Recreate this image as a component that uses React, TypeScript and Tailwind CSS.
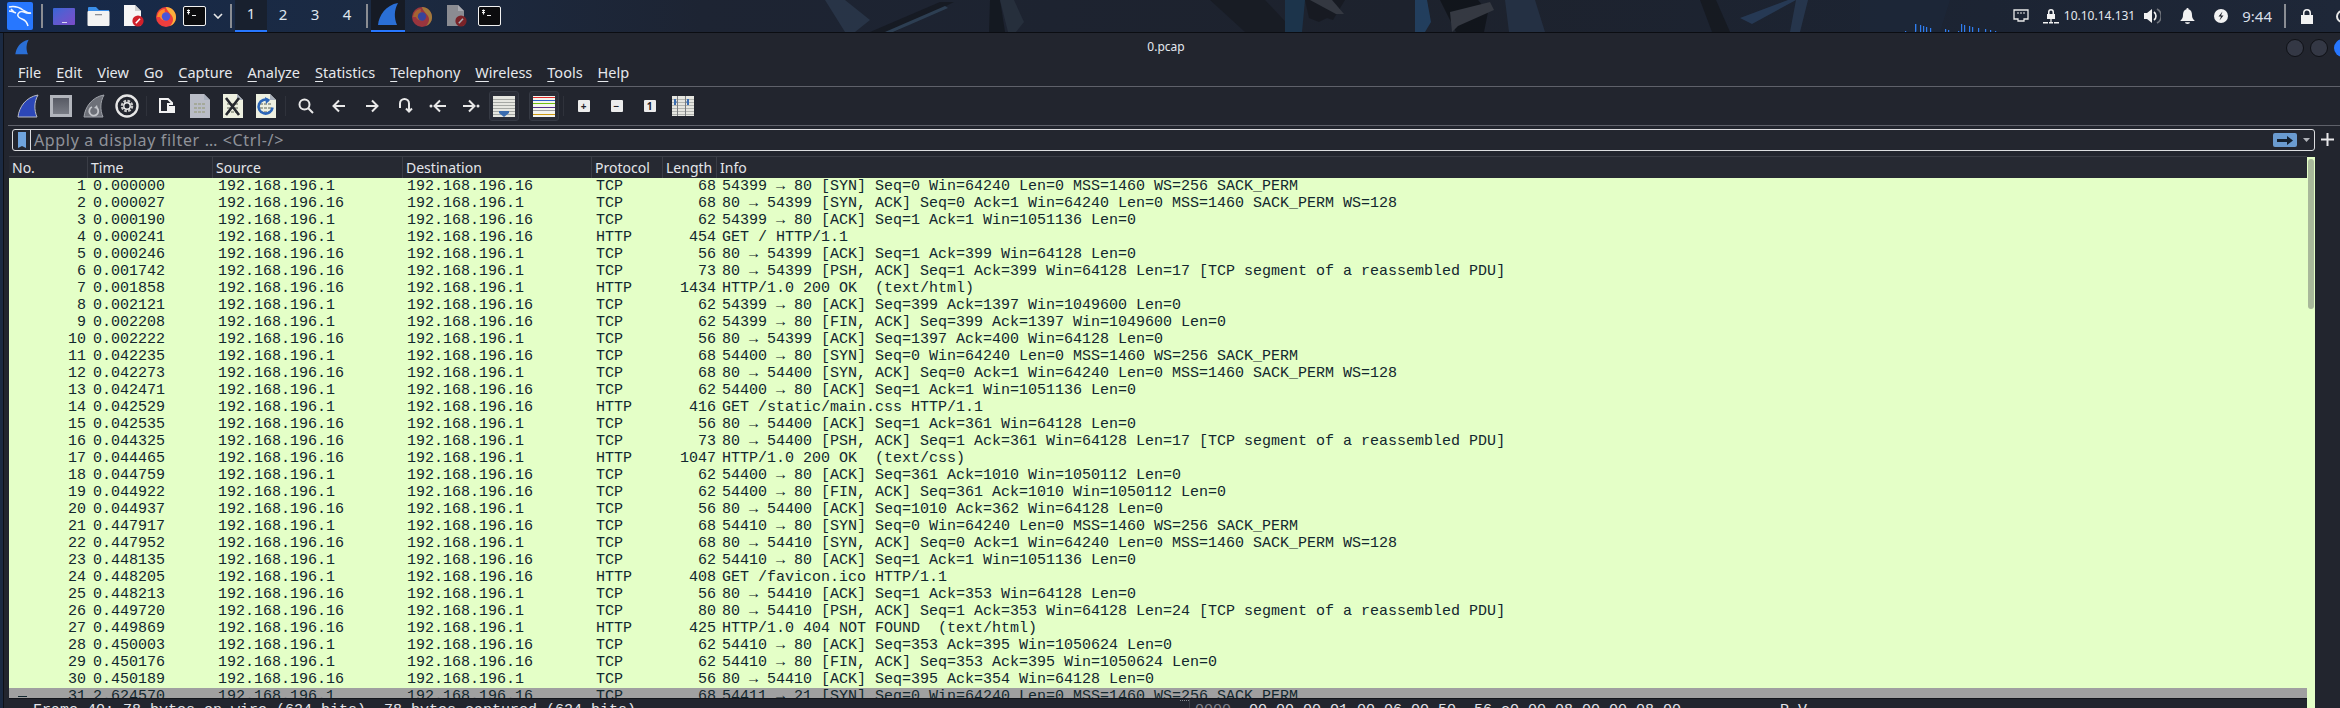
import React from "react";

const A = "192.168.196.1";
const B = "192.168.196.16";
type R = [number, string, boolean, string, number, string];
const syn = (p: number) => `${p} → 80 [SYN] Seq=0 Win=64240 Len=0 MSS=1460 WS=256 SACK_PERM`;
const synack = (p: number) => `80 → ${p} [SYN, ACK] Seq=0 Ack=1 Win=64240 Len=0 MSS=1460 SACK_PERM WS=128`;
const rows: R[] = [
  [1, "0.000000", true, "TCP", 68, syn(54399)],
  [2, "0.000027", false, "TCP", 68, synack(54399)],
  [3, "0.000190", true, "TCP", 62, "54399 → 80 [ACK] Seq=1 Ack=1 Win=1051136 Len=0"],
  [4, "0.000241", true, "HTTP", 454, "GET / HTTP/1.1"],
  [5, "0.000246", false, "TCP", 56, "80 → 54399 [ACK] Seq=1 Ack=399 Win=64128 Len=0"],
  [6, "0.001742", false, "TCP", 73, "80 → 54399 [PSH, ACK] Seq=1 Ack=399 Win=64128 Len=17 [TCP segment of a reassembled PDU]"],
  [7, "0.001858", false, "HTTP", 1434, "HTTP/1.0 200 OK  (text/html)"],
  [8, "0.002121", true, "TCP", 62, "54399 → 80 [ACK] Seq=399 Ack=1397 Win=1049600 Len=0"],
  [9, "0.002208", true, "TCP", 62, "54399 → 80 [FIN, ACK] Seq=399 Ack=1397 Win=1049600 Len=0"],
  [10, "0.002222", false, "TCP", 56, "80 → 54399 [ACK] Seq=1397 Ack=400 Win=64128 Len=0"],
  [11, "0.042235", true, "TCP", 68, syn(54400)],
  [12, "0.042273", false, "TCP", 68, synack(54400)],
  [13, "0.042471", true, "TCP", 62, "54400 → 80 [ACK] Seq=1 Ack=1 Win=1051136 Len=0"],
  [14, "0.042529", true, "HTTP", 416, "GET /static/main.css HTTP/1.1"],
  [15, "0.042535", false, "TCP", 56, "80 → 54400 [ACK] Seq=1 Ack=361 Win=64128 Len=0"],
  [16, "0.044325", false, "TCP", 73, "80 → 54400 [PSH, ACK] Seq=1 Ack=361 Win=64128 Len=17 [TCP segment of a reassembled PDU]"],
  [17, "0.044465", false, "HTTP", 1047, "HTTP/1.0 200 OK  (text/css)"],
  [18, "0.044759", true, "TCP", 62, "54400 → 80 [ACK] Seq=361 Ack=1010 Win=1050112 Len=0"],
  [19, "0.044922", true, "TCP", 62, "54400 → 80 [FIN, ACK] Seq=361 Ack=1010 Win=1050112 Len=0"],
  [20, "0.044937", false, "TCP", 56, "80 → 54400 [ACK] Seq=1010 Ack=362 Win=64128 Len=0"],
  [21, "0.447917", true, "TCP", 68, syn(54410)],
  [22, "0.447952", false, "TCP", 68, synack(54410)],
  [23, "0.448135", true, "TCP", 62, "54410 → 80 [ACK] Seq=1 Ack=1 Win=1051136 Len=0"],
  [24, "0.448205", true, "HTTP", 408, "GET /favicon.ico HTTP/1.1"],
  [25, "0.448213", false, "TCP", 56, "80 → 54410 [ACK] Seq=1 Ack=353 Win=64128 Len=0"],
  [26, "0.449720", false, "TCP", 80, "80 → 54410 [PSH, ACK] Seq=1 Ack=353 Win=64128 Len=24 [TCP segment of a reassembled PDU]"],
  [27, "0.449869", false, "HTTP", 425, "HTTP/1.0 404 NOT FOUND  (text/html)"],
  [28, "0.450003", true, "TCP", 62, "54410 → 80 [ACK] Seq=353 Ack=395 Win=1050624 Len=0"],
  [29, "0.450176", true, "TCP", 62, "54410 → 80 [FIN, ACK] Seq=353 Ack=395 Win=1050624 Len=0"],
  [30, "0.450189", false, "TCP", 56, "80 → 54410 [ACK] Seq=395 Ack=354 Win=64128 Len=0"],
  [31, "2.624570", true, "TCP", 68, "54411 → 21 [SYN] Seq=0 Win=64240 Len=0 MSS=1460 WS=256 SACK_PERM"],
];

const cols = "grid grid-cols-[79px_125px_190px_189px_71px_54px_1fr]";

const Fin = ({ fill = "#2b63c8", w = 22, h = 24 }: { fill?: string; w?: number; h?: number }) => (
  <svg width={w} height={h} viewBox="0 0 22 24">
    <path d="M1 23C2 13 9 3 21 1C17 8 17 16 20 23Z" fill={fill} />
  </svg>
);

const Terminal = () => (
  <svg width="23" height="20" viewBox="0 0 23 20">
    <rect x="0.5" y="0.5" width="22" height="19" rx="1.5" fill="#0c0c0e" stroke="#f2f2f2" />
    <path d="M4 4.5h3M4 6.5h3M5.5 3.5v5M9 9.5h4" stroke="#f2f2f2" strokeWidth="1.2" fill="none" />
  </svg>
);

const Firefox = ({ dim = false }: { dim?: boolean }) => (
  <svg width="22" height="22" viewBox="0 0 22 22" opacity={dim ? 0.6 : 1}>
    <circle cx="11" cy="12" r="10" fill="#ee3d3d" />
    <path d="M11 2c5 0 10 4 10 10 0 5-3 8-6 9 3-3 4-7 2-10-1-2-3-3-4-5-1-1-2-3-2-4Z" fill="#fbb03b" />
    <path d="M2 12C3 6 7 4 10 4c-1 2 0 3 2 4 3 1 3 5 0 7-3 1-6 0-7-3Z" fill="#ff8a2a" />
    <circle cx="11" cy="11.5" r="4.2" fill="#4a55d8" />
  </svg>
);

const Doc = ({ dim = false }: { dim?: boolean }) => (
  <svg width="22" height="22" viewBox="0 0 22 22">
    <path d="M1 0h11l6 6v15H1Z" fill={dim ? "#8b8c92" : "#f6f6f6"} />
    <path d="M12 0l6 6h-6Z" fill={dim ? "#a9aab0" : "#cfcfcf"} />
    <circle cx="15" cy="16" r="5.6" fill={dim ? "#7a2328" : "#d0202a"} />
    <path d="M12.8 18.2l4.2-4.4" stroke={dim ? "#a9aab0" : "#fff"} strokeWidth="1.6" />
  </svg>
);

const Launcher = ({ children, className = "" }: { children: React.ReactNode; className?: string }) => (
  <div className={`flex items-center justify-center ${className}`}>{children}</div>
);

const Wallpaper = () => (
  <svg className="absolute inset-0" width="2340" height="32" viewBox="0 0 2340 32">
    <defs>
      <linearGradient id="wp" x1="0" x2="1" y1="0" y2="0">
        <stop offset="0" stopColor="#16294a" />
        <stop offset="0.16" stopColor="#1b2a42" />
        <stop offset="0.3" stopColor="#1d2433" />
        <stop offset="0.6" stopColor="#1d222d" />
        <stop offset="0.85" stopColor="#1c2433" />
        <stop offset="1" stopColor="#1e2738" />
      </linearGradient>
    </defs>
    <rect width="2340" height="32" fill="url(#wp)" />
    <g opacity="0.75">
      <path d="M825 0h20l25 20 -15 12h-10Z" fill="#2c3a4e" />
      <path d="M870 32l70-30h14l-60 30Z" fill="#14181f" />
      <path d="M885 32l60-26 3 2-55 24Z" fill="#33485e" />
      <path d="M990 0h10l5 32h-16Z" fill="#12161c" />
      <path d="M1000 0h14l10 22 -8 10h-8Z" fill="#2a3340" />
      <path d="M1210 0h55l30 32h-50Z" fill="#171a21" />
      <path d="M1285 0h20l-3 32h-17Z" fill="#1c3a55" />
      <path d="M1305 0h40l-12 20-6-2-8 4-10-4Z" fill="#15181f" />
      <path d="M1310 0h22l12 14h-8Z" fill="#3c4048" />
      <path d="M1415 0h12l4 22-6 10h-10Z" fill="#24486e" />
      <path d="M1440 0h38l10 12-4 20h-28Z" fill="#0e1116" />
      <path d="M1450 12l40-10 4 8-36 16-6 6Z" fill="#3d4149" />
      <path d="M1505 0h30l10 32h-36Z" fill="#27354a" />
      <path d="M1700 0h16l14 32h-18Z" fill="#14171d" />
      <path d="M1740 18l48-18h8l-44 24Z" fill="#2a4160" />
      <path d="M1790 32l6-32h12l-8 32Z" fill="#2a3c55" />
      <path d="M1860 0h90l-10 32h-80Z" fill="#1c2a3e" opacity="0.6" />
    </g>
    {[1905, 1915, 1920, 1923, 1926, 1930, 1945, 1948, 1958, 1961, 1964, 1969, 1972, 1978, 1985, 1990, 1995].map((x, i) => (
      <rect key={x} x={x} y={31 - (i * 7) % 8} width="1.2" height={(i * 7) % 8 + 1} fill="#2f7df0" />
    ))}
    <rect x="1915" y="24" width="1.2" height="7" fill="#2f7df0" />
  </svg>
);

const Taskbar = () => (
  <div className="relative flex h-[32px] shrink-0 items-center">
    <Wallpaper />
    <div className="relative flex h-full items-center pl-[7px]">
      <div className="flex h-[28px] w-[26px] items-center justify-center rounded-[2px] bg-[#2777ff]">
        <svg width="24" height="24" viewBox="0 0 24 24" fill="none" stroke="#f2f7ff" strokeWidth="1.5">
          <path d="M1 3c5-1 10 0 14 3 3 2 6 3 8 3-3 1-5 0-7-1-3-1-5 0-6 2-1 2 1 4 4 5 3 1 5 3 6 7" />
          <path d="M1 7c3 0 5 1 7 2M3 5l3 3" />
        </svg>
      </div>
      <div className="ml-[8px] h-[24px] w-[2px] bg-[#8a8d93]" />
      <Launcher className="ml-[9px] w-[24px]">
        <div className="flex h-[17px] w-[22px] items-end justify-center rounded-[1px] bg-gradient-to-br from-[#3566d6] to-[#7a4bc8]">
          <div className="mb-[2px] h-[1px] w-[5px] bg-[#d9d9f5]" />
        </div>
      </Launcher>
      <Launcher className="ml-[10px] w-[24px]">
        <svg width="23" height="20" viewBox="0 0 23 20">
          <path d="M1 4V2q0-1 1-1h7l3 3h10v3H1Z" fill="#3a8ee8" />
          <rect x="0.5" y="5" width="22" height="15" rx="1" fill="#f3f3f3" />
          <rect x="8" y="8" width="7" height="1.3" fill="#8d9097" />
        </svg>
      </Launcher>
      <Launcher className="ml-[12px] w-[24px]"><Doc /></Launcher>
      <Launcher className="ml-[9px] w-[22px]"><Firefox /></Launcher>
      <Launcher className="ml-[5px] w-[24px]"><Terminal /></Launcher>
      <Launcher className="ml-[6px] w-[12px]">
        <svg width="10" height="6" viewBox="0 0 10 6" fill="none" stroke="#e8e8e8" strokeWidth="1.6"><path d="M1 1l4 4 4-4" /></svg>
      </Launcher>
      <div className="ml-[6px] h-[24px] w-[2px] bg-[#8a8d93]" />
      <div className="ml-[3px] flex h-full font-['Noto_Sans',sans-serif] text-[15px] text-[#dfe6ee]">
        {[1, 2, 3, 4].map((n) => (
          <div key={n} className={`flex h-full w-[32px] items-center justify-center pb-[3px] ${n === 1 ? "border-b-[2px] border-[#2777ff] bg-[#18202e]" : ""}`}>{n}</div>
        ))}
      </div>
      <div className="ml-[3px] h-[24px] w-[2px] bg-[#8a8d93]" />
      <div className="ml-[3px] flex h-full w-[34px] items-center justify-center border-b-[2px] border-[#2777ff] bg-[#161b25] pb-[2px]">
        <Fin fill="#2a6fd6" />
      </div>
      <Launcher className="ml-[6px] w-[22px]"><Firefox dim /></Launcher>
      <Launcher className="ml-[13px] w-[22px]"><Doc dim /></Launcher>
      <Launcher className="ml-[9px] w-[24px]"><Terminal /></Launcher>
    </div>
    <div className="relative ml-auto flex h-full items-center font-['Noto_Sans',sans-serif] text-[#e4e8ee]">
      <svg className="mr-[14px]" width="16" height="14" viewBox="0 0 16 14" fill="none" stroke="#e8e8e8" strokeWidth="1.3">
        <path d="M1 1h14v9h-4v2H5v-2H1Z" />
        <path d="M5 3v2M8 3v2M11 3v2" strokeWidth="1" />
      </svg>
      <svg className="mr-[5px]" width="16" height="16" viewBox="0 0 16 16" fill="#f2f2f2">
        <path d="M5 6V4a3 3 0 0 1 6 0v2h1v5H4V6Zm1.5 0h3V4a1.5 1.5 0 0 0-3 0Z" />
        <path d="M0 14h5v1.5H0ZM6 14h4v1.5H6ZM11 14h5v1.5h-5ZM7.4 11h1.2v3H7.4Z" />
      </svg>
      <span className="mr-[9px] text-[12px]">10.10.14.131</span>
      <svg className="mr-[19px]" width="17" height="16" viewBox="0 0 17 16">
        <path d="M0 5h3l5-4v14l-5-4H0Z" fill="#f2f2f2" />
        <path d="M10 4a5 5 0 0 1 0 8" stroke="#f2f2f2" strokeWidth="1.6" fill="none" />
        <path d="M13 1a8 8 0 0 1 0 14" stroke="#70747c" strokeWidth="1.6" fill="none" />
      </svg>
      <svg className="mr-[19px]" width="15" height="16" viewBox="0 0 15 16" fill="#f2f2f2">
        <path d="M7.5 0a1 1 0 0 1 1 1.2C11 2 12 4 12 7c0 3 1 4 2.5 5.5v.5H.5v-.5C2 11 3 10 3 7c0-3 1-5 3.500-5.800A1 1 0 0 1 7.500 0ZM5 14.200h5a2.500 1.800 0 0 1-5 0Z" />
      </svg>
      <svg className="mr-[14px]" width="14" height="14" viewBox="0 0 14 14">
        <circle cx="7" cy="7" r="7" fill="#f2f2f2" />
        <path d="M8.500 2.500L4.500 7.500h2.500L5.500 11.500l4-5H7Z" fill="#20242d" />
      </svg>
      <span className="mr-[12px] text-[15px] text-[#d8dfe8]">9:44</span>
      <div className="mr-[14px] h-[24px] w-[2px] bg-[#8a8d93]" />
      <svg className="mr-[22px]" width="14" height="15" viewBox="0 0 14 15" fill="#f2f2f2">
        <path d="M1 6h2V4a4 4 0 0 1 8 0v2h2v9H1Zm3.500 0h5V4a2.500 2.500 0 0 0-5 0Z" />
      </svg>
      <div className="-mr-[9px] h-[13px] w-[13px] rounded-full border-[2px] border-[#e8e8e8]" />
    </div>
  </div>
);

const IconBtn = ({ children, className = "" }: { children: React.ReactNode; className?: string }) => (
  <div className={`flex h-[33px] w-[33px] shrink-0 items-center justify-center ${className}`}>{children}</div>
);
const ToolSep = () => (
  <div className="flex w-[7px] shrink-0 justify-center"><div className="h-[20px] w-[1px] bg-[#2f323b]" /></div>
);

const PageDoc = ({ children, fill = "#eef0e0" }: { children: React.ReactNode; fill?: string }) => (
  <svg width="20" height="24" viewBox="0 0 20 24">
    <path d="M0 0h14l6 6v18H0Z" fill={fill} />
    <path d="M14 0l6 6h-6Z" fill="#a9b0bc" />
    {[9, 13, 17].map((y) => [4, 8, 12].map((x) => <rect key={`${x}${y}`} x={x} y={y} width="3" height="2" fill="#a5a99a" />))}
    {children}
  </svg>
);

const Arrow = ({ d }: { d: string }) => (
  <svg width="18" height="18" viewBox="0 0 18 18" fill="none" stroke="#e8e8e8" strokeWidth="2"><path d={d} /></svg>
);

const Square = ({ children }: { children: React.ReactNode }) => (
  <div className="flex h-[12px] w-[12px] items-center justify-center rounded-[1px] bg-[#ececec] font-['Noto_Sans',sans-serif] text-[10px] font-bold leading-none text-[#1f2229]">{children}</div>
);

const Toolbar = () => (
  <div className="flex h-[38px] shrink-0 items-center pl-[7px]">
    <IconBtn>
      <svg width="22" height="24" viewBox="0 0 22 24">
        <path d="M1 23C2 13 9 3 21 1C17 8 17 16 20 23Z" fill="#2c47b8" stroke="#b9bcc4" strokeWidth="1" />
      </svg>
    </IconBtn>
    <IconBtn><div className="h-[22px] w-[22px] border-[3px] border-[#b2b5bc] bg-gradient-to-b from-[#575a64] to-[#797c85]" /></IconBtn>
    <IconBtn>
      <svg width="22" height="24" viewBox="0 0 22 24">
        <path d="M1 23C2 13 9 3 21 1C17 8 17 16 20 23Z" fill="#6d7078" stroke="#a0a3aa" strokeWidth="1" />
        <path d="M9 13a4.500 4.500 0 1 0 5 1" fill="none" stroke="#c4c6cb" strokeWidth="1.800" />
        <path d="M14 11l1 4-4-1Z" fill="#c4c6cb" />
      </svg>
    </IconBtn>
    <IconBtn>
      <svg width="24" height="24" viewBox="0 0 24 24" fill="none">
        <circle cx="12" cy="12" r="10.500" stroke="#e6e6e6" strokeWidth="2.400" />
        <circle cx="12" cy="12" r="5" stroke="#c8c8c8" strokeWidth="2.500" strokeDasharray="2.600 1.300" />
        <circle cx="12" cy="12" r="3.200" stroke="#ececec" strokeWidth="1.400" />
      </svg>
    </IconBtn>
    <ToolSep />
    <IconBtn>
      <svg width="16" height="16" viewBox="0 0 16 16" fill="none">
        <path d="M1 1h8l4 4v1H9V14H1Z" stroke="#f2f2f2" strokeWidth="2" />
        <rect x="8" y="8" width="8" height="7" fill="#f2f2f2" />
      </svg>
    </IconBtn>
    <IconBtn>
      <PageDoc fill="#b9bcc6"><path d="M2 0h0" /></PageDoc>
    </IconBtn>
    <IconBtn>
      <PageDoc>
        <path d="M3 4l13 17M16 4L3 21" stroke="#26282e" strokeWidth="2.600" />
      </PageDoc>
    </IconBtn>
    <IconBtn>
      <PageDoc>
        <path d="M13 6.500a7 7 0 1 0 3.500 7" fill="none" stroke="#2c66b8" strokeWidth="2.600" />
        <path d="M9 3l5 3-4 4Z" fill="#2c66b8" />
      </PageDoc>
    </IconBtn>
    <ToolSep />
    <IconBtn><Arrow d="M7.500 2.500a5 5 0 1 1 0 10a5 5 0 0 1 0-10ZM11 11l5 5" /></IconBtn>
    <IconBtn><Arrow d="M15 9H4M9 3.500L3.500 9 9 14.500" /></IconBtn>
    <IconBtn><Arrow d="M3 9h11M9 3.500L14.500 9 9 14.500" /></IconBtn>
    <IconBtn><Arrow d="M4 11V6.500a4.500 4.500 0 0 1 9 0V14M10 11.500l3 3 3-3" /></IconBtn>
    <IconBtn>
      <svg width="18" height="18" viewBox="0 0 18 18" fill="none" stroke="#e8e8e8" strokeWidth="2">
        <path d="M17 9H7M11 3.500L5.500 9l5.500 5.500" />
        <circle cx="2" cy="9" r="1.500" fill="#e8e8e8" stroke="none" />
      </svg>
    </IconBtn>
    <IconBtn>
      <svg width="18" height="18" viewBox="0 0 18 18" fill="none" stroke="#e8e8e8" strokeWidth="2">
        <path d="M1 9h10M7 3.500L12.500 9 7 14.500" />
        <circle cx="16" cy="9" r="1.500" fill="#e8e8e8" stroke="none" />
      </svg>
    </IconBtn>
    <IconBtn>
      <div className="flex h-[30px] w-[30px] items-center justify-center rounded-[3px] border border-[#363a44] bg-[#2a2d37]">
        <svg width="22" height="21" viewBox="0 0 22 21">
          <rect width="22" height="21" fill="#e6e6e0" />
          {[3, 6, 9, 12, 15, 18].map((y) => <rect key={y} y={y} width="22" height="1" fill="#a6a8a4" />)}
          <path d="M6 15h10v2l-5 4-5-4Z" fill="#3a6cb0" />
        </svg>
      </div>
    </IconBtn>
    <IconBtn className="ml-[7px]">
      <div className="flex h-[30px] w-[30px] items-center justify-center rounded-[3px] border border-[#363a44] bg-[#2a2d37]">
        <svg width="22" height="21" viewBox="0 0 22 21">
          <rect width="22" height="21" fill="#f4f4ee" />
          <rect y="1" width="22" height="1" fill="#e02a2a" />
          <rect y="4" width="22" height="1" fill="#3060c8" />
          <rect y="7" width="22" height="1" fill="#70c010" />
          <rect y="11" width="22" height="1" fill="#50308a" />
          <rect y="14" width="22" height="1" fill="#a0a0a0" />
          <rect y="18" width="22" height="1" fill="#d09a10" />
        </svg>
      </div>
    </IconBtn>
    <ToolSep />
    <IconBtn><Square>+</Square></IconBtn>
    <IconBtn><Square>−</Square></IconBtn>
    <IconBtn><Square>1</Square></IconBtn>
    <IconBtn>
      <svg width="22" height="20" viewBox="0 0 22 20">
        <rect width="22" height="20" fill="#e6e6e0" />
        {[3, 6, 9, 12, 15, 18].map((y) => <rect key={y} y={y} width="22" height="1" fill="#b2b4b0" />)}
        <rect x="5" width="1" height="20" fill="#7b7d80" />
        <rect x="13" width="1" height="20" fill="#7b7d80" />
        <path d="M2 3l3 3-3 3ZM17 3l-3 3 3 3Z" fill="#3a6cb0" />
        <rect x="2" y="3" width="2" height="6" fill="#3a6cb0" />
        <rect x="15" y="3" width="2" height="6" fill="#3a6cb0" />
      </svg>
    </IconBtn>
  </div>
);

const menus: [string, string][] = [
  ["F", "ile"], ["E", "dit"], ["V", "iew"], ["G", "o"], ["C", "apture"], ["A", "nalyze"],
  ["S", "tatistics"], ["T", "elephony"], ["W", "ireless"], ["T", "ools"], ["H", "elp"],
];

const App = () => (
  <div className="flex h-[708px] w-[2340px] flex-col overflow-hidden bg-[#1b2a42]">
    <Taskbar />
    <div className="h-[1px] shrink-0 bg-[#0b0d12]" />
    <div className="ml-[3px] flex min-h-0 flex-1 flex-col border-l border-[#0f1116] bg-[#22252e]">
      {/* title bar */}
      <div className="relative flex h-[27px] shrink-0 items-center justify-center">
        <div className="absolute left-[10px] top-[6px]"><Fin fill="#2a6fd6" w={16} h={16} /></div>
        <span className="pr-[12px] font-['Noto_Sans',sans-serif] text-[12px] text-[#e4e8ee]">0.pcap</span>
        <div className="absolute right-[-12px] top-[6px] flex gap-[6px]">
          <div className="h-[18px] w-[18px] rounded-full border border-[#0f1116] bg-[#343845]" />
          <div className="h-[18px] w-[18px] rounded-full border border-[#0f1116] bg-[#343845]" />
          <div className="h-[18px] w-[18px] rounded-full bg-[#2777ff]" />
        </div>
      </div>
      {/* menu bar */}
      <div className="flex h-[26px] shrink-0 items-center gap-[15px] pl-[14px] font-['Noto_Sans',sans-serif] text-[14.5px] text-[#e6e8ec]">
        {menus.map(([a, b], i) => (
          <span key={i}><span className="underline decoration-1 underline-offset-[3px]">{a}</span>{b}</span>
        ))}
      </div>
      <div className="ml-[4px] h-[1px] shrink-0 bg-[#5f616a]" />
      <Toolbar />
      <div className="ml-[4px] h-[1px] shrink-0 bg-[#5f616a]" />
      {/* filter */}
      <div className="flex h-[30px] shrink-0 items-start pl-[8px] pr-[6px] pt-[3px]">
        <div className="flex h-[22px] flex-1 items-center rounded-[3px] border border-[#dcdde0] bg-[#23262f]">
          <div className="flex h-full w-[18px] shrink-0 items-center justify-center border-r border-[#dcdde0]">
            <svg width="8" height="16" viewBox="0 0 8 16"><path d="M0 0h8v16l-4-2-4 2Z" fill="#6fa3dc" /></svg>
          </div>
          <span className="ml-[3px] font-['Noto_Sans',sans-serif] text-[16px] tracking-[0.65px] text-[#8f9299]">Apply a display filter … &lt;Ctrl-/&gt;</span>
          <div className="ml-auto mr-[6px] flex h-[14px] w-[24px] items-center justify-center rounded-[2px] bg-[#6a9bd0]">
            <svg width="16" height="9" viewBox="0 0 16 9"><path d="M0 3h10V0l6 4.500-6 4.500V6H0Z" fill="#14202e" /></svg>
          </div>
          <svg className="mr-[4px]" width="7" height="4" viewBox="0 0 7 4"><path d="M0 0h7L3.500 4Z" fill="#b0b2b8" /></svg>
        </div>
        <svg className="ml-[6px] mt-[4px]" width="13" height="13" viewBox="0 0 13 13"><path d="M5.500 0h2v5.500H13v2H7.500V13h-2V7.500H0v-2h5.500Z" fill="#e8e8ea" /></svg>
      </div>
      {/* packet list */}
      <div className="flex min-h-0 flex-1">
        <div className="ml-[5px] flex w-[2298px] flex-col">
          <div className={`${cols} h-[22px] shrink-0 border-t border-[#3a3d46] bg-[#262932] font-['Noto_Sans',sans-serif] text-[14px] leading-[21px] text-[#e4e6ea]`}>
            {["No.", "Time", "Source", "Destination", "Protocol", "Length", "Info"].map((h, i) => (
              <div key={h} className={`pl-[3px] ${i < 6 ? "border-r border-[#3a3d46]" : ""}`}>{h}</div>
            ))}
          </div>
          <div className="h-[520px] shrink-0 overflow-hidden font-['Liberation_Mono',monospace] text-[15px] leading-[17px] text-[#12272e]">
            {rows.map(([n, t, fromA, p, l, info]) => (
              <div key={n} className={`${cols} relative h-[17px] ${n === 31 ? "bg-[#a0a0a0]" : "bg-[#e4ffc7]"}`}>
                {n === 31 && <div className="absolute left-[9px] top-[8px] h-[1px] w-[9px] bg-[#12272e]" />}
                <div className="pr-[2px] text-right">{n}</div>
                <div className="pl-[5px]">{t}</div>
                <div className="pl-[5px]">{fromA ? A : B}</div>
                <div className="pl-[4px]">{fromA ? B : A}</div>
                <div className="pl-[4px]">{p}</div>
                <div className="pr-[1px] text-right">{l}</div>
                <div className="whitespace-pre pl-[5px]">{info}</div>
              </div>
            ))}
          </div>
          <div className="relative flex h-[12px] shrink-0 border-t border-[#14161c] font-['Liberation_Mono',monospace] text-[15px] leading-[17px] text-[#e4e6ea]">
            <div className="w-[1180px] whitespace-pre pl-[24px] pt-[3px]">Frame 40: 78 bytes on wire (624 bits), 78 bytes captured (624 bits)</div>
            <div className="absolute left-[1171px] top-[1px] h-[2px] w-[9px] border-t border-dotted border-[#8a8d93]" />
            <div className="flex-1 whitespace-pre border-l border-[#3a3d46] pl-[5px] pt-[3px]">
              <span className="text-[#80838a]">0000</span>
              <span>  00 00 00 01 00 06 00 50  56 c0 00 08 00 00 08 00    .......P V.......</span>
            </div>
          </div>
        </div>
        <div className="mt-[1px] h-[560px] w-[8px] shrink-0 bg-[#e4ffc7] px-[1px] pt-[2px]">
          <div className="h-[150px] w-[6px] rounded-[3px] bg-[#a8b89a]" />
        </div>
      </div>
    </div>
  </div>
);

export default App;
